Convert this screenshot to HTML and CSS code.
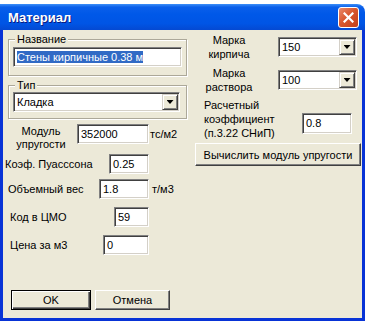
FILE: index.html
```html
<!DOCTYPE html>
<html lang="ru">
<head>
    <meta charset="UTF-8">
    <title>Материал</title>
    <link rel="stylesheet" href="styles.css">
</head>
<body>
<div class="window">
    <div class="titlebar">
        <span class="title">Материал</span>
        <span class="close">
            <svg width="11" height="11" viewBox="0 0 11 11"><path d="M1.5 1.5 L9.5 9.5 M9.5 1.5 L1.5 9.5" stroke="#fff" stroke-width="2.2" stroke-linecap="square"/></svg>
        </span>
    </div>
    <div class="client">
        <div class="col-left">
            <div class="group group-name">
                <span class="legend">Название</span>
                <div class="edit"><span class="sel">Стены кирпичные 0.38 м</span></div>
            </div>
            <div class="group group-type">
                <span class="legend">Тип</span>
                <div class="combo"><span class="combo-text">Кладка</span><span class="drop"></span></div>
            </div>
            <div class="row row-mod">
                <div class="pair">
                    <span class="lbl lbl-mod">Модуль<br>упругости</span>
                    <div class="edit edit-mod">352000</div>
                </div>
                <span class="unit unit-mod">тс/м2</span>
            </div>
            <div class="row row-poisson">
                <div class="pair">
                    <span class="lbl lbl-poisson">Коэф. Пуасссона</span>
                    <div class="edit edit-poisson">0.25</div>
                </div>
            </div>
            <div class="row row-weight">
                <div class="pair">
                    <span class="lbl lbl-weight">Объемный вес</span>
                    <div class="edit edit-weight">1.8</div>
                </div>
                <span class="unit unit-weight">т/м3</span>
            </div>
            <div class="row row-code">
                <div class="pair">
                    <span class="lbl lbl-code">Код в ЦМО</span>
                    <div class="edit edit-code">59</div>
                </div>
            </div>
            <div class="row row-price">
                <div class="pair">
                    <span class="lbl lbl-price">Цена за м3</span>
                    <div class="edit edit-price">0</div>
                </div>
            </div>
            <div class="buttons">
                <div class="btn btn-default">OK</div>
                <div class="btn btn-cancel">Отмена</div>
            </div>
        </div>
        <div class="col-right">
            <div class="rrow rrow-brick">
                <span class="rlbl">Марка<br>кирпича</span>
                <div class="combo combo-r"><span class="combo-text">150</span><span class="drop"></span></div>
            </div>
            <div class="rrow rrow-mortar">
                <span class="rlbl">Марка<br>раствора</span>
                <div class="combo combo-r"><span class="combo-text">100</span><span class="drop"></span></div>
            </div>
            <div class="rrow rrow-coef">
                <span class="clbl">Расчетный<br>коэффициент<br>(п.3.22 СНиП)</span>
                <div class="edit edit-coef">0.8</div>
            </div>
            <div class="btn btn-calc">Вычислить модуль упругости</div>
        </div>
    </div>
</div>
</body>
</html>
```

FILE: styles.css
```css
*{
    margin:0;
    padding:0;
    box-sizing:border-box;
}
body,html{
    width:100%;
    height:100%;
}
body{
    background:#fff;
    font-family:"Liberation Sans", Arial, sans-serif;
    font-size:11px;
    color:#000;
    overflow:hidden;
}
.window{
    width:365px;
    height:317px;
    margin-top:4px;
    display:flex;
    flex-direction:column;
}
.titlebar{
    height:26px;
    flex:none;
    display:flex;
    align-items:center;
    justify-content:space-between;
    padding:0 6px 0 8px;
    border-radius:0 8px 0 0;
    background:linear-gradient(#3d8ff8 0, #0a5fea 12%, #0058e8 40%, #0055e5 75%, #0449d2 100%);
}
.title{
    color:#fff;
    font-weight:bold;
    font-size:13px;
    text-shadow:1px 1px #0a1a80;
}
.close{
    width:21px;
    height:21px;
    border:1px solid #fff;
    border-radius:3px;
    background:linear-gradient(135deg, #e98a6c 0, #d9582f 45%, #c23f1a 100%);
    display:flex;
    align-items:center;
    justify-content:center;
}
.client{
    flex:1;
    display:grid;
    grid-template-columns:187px 1fr;
    background:#ece9d8;
    border:3px solid #0833d6;
    border-top:0;
}

/* group boxes */
.group{
    position:relative;
    margin-left:5px;
    width:179px;
    border:1px solid #aca899;
    box-shadow:inset 1px 1px #fff, 1px 1px #fff;
}
.legend{
    position:absolute;
    left:6px;
    top:-7px;
    line-height:13px;
    padding:0 2px;
    background:#ece9d8;
}
.group-name{
    margin-top:9px;
    padding:7px 4px 8px 4px;
}
.group-type{
    margin-top:9px;
    padding:6px 6px 6px 4px;
}

/* edits and combos */
.edit{
    height:20px;
    background:#fff;
    border:1px solid;
    border-color:#808080 #fff #fff #808080;
    box-shadow:inset 1px 1px #404040, inset -1px -1px #d4d0c8;
    padding:0 3px;
    line-height:18px;
    white-space:nowrap;
}
.sel{
    background:#316ac5;
    color:#fff;
}
.combo{
    height:20px;
    background:#fff;
    border:1px solid;
    border-color:#808080 #fff #fff #808080;
    box-shadow:inset 1px 1px #404040, inset -1px -1px #d4d0c8;
    display:flex;
    align-items:center;
    padding:1px;
}
.combo-text{
    flex:1;
    padding-left:2px;
}
.drop{
    width:16px;
    height:16px;
    background:#ece9d8;
    border:1px solid;
    border-color:#d4d0c8 #404040 #404040 #d4d0c8;
    box-shadow:inset 1px 1px #fff, inset -1px -1px #808080;
    display:flex;
    align-items:center;
    justify-content:center;
}
.drop::after{
    content:"";
    width:7px;
    height:4px;
    background:#000;
    clip-path:polygon(0 0, 100% 0, 50% 100%);
}

/* left column rows */
.col-left{
    display:flex;
    flex-direction:column;
    padding-bottom:8px;
}
.row{
    display:flex;
    align-items:center;
}
.pair{
    width:146px;
    display:flex;
    align-items:center;
}
.lbl{
    flex:1;
    line-height:13px;
    white-space:nowrap;
}
.row-mod{
    margin-top:5px;
    align-items:flex-start;
}
.row-mod .pair{
    align-items:flex-start;
}
.lbl-mod{
    flex:none;
    width:62px;
    margin:1px auto 0 7px;
    text-align:center;
}
.edit-mod{ width:72px; }
.unit{ line-height:13px; }
.unit-mod{ margin:4px 0 0 1px; }

.row-poisson{ margin-top:3px; }
.lbl-poisson{ margin-left:2px; }
.edit-poisson{ width:40px; }

.row-weight{ margin-top:5px; }
.lbl-weight{ margin-left:5px; }
.edit-weight{ width:50px; }
.unit-weight{ margin-left:3px; }

.row-code{ margin-top:8px; }
.lbl-code{ margin-left:7px; }
.edit-code{ width:35px; }

.row-price{ margin-top:8px; }
.lbl-price{ margin-left:7px; }
.edit-price{ width:46px; }

/* buttons */
.buttons{
    margin-top:auto;
    margin-left:8px;
    display:flex;
    gap:4px;
}
.btn{
    height:20px;
    background:#ece9d8;
    border:1px solid;
    border-color:#fff #404040 #404040 #fff;
    box-shadow:inset -1px -1px #808080;
    display:flex;
    align-items:center;
    justify-content:center;
}
.btn-default{
    width:80px;
    border-color:#000;
    box-shadow:inset 1px 1px #fff, inset -1px -1px #404040, inset -2px -2px #808080;
}
.btn-cancel{ width:75px; }

/* right column */
.col-right{
    padding:3px 5px 0 5px;
}
.rrow{
    display:flex;
    align-items:center;
}
.rlbl{
    width:68px;
    text-align:center;
    line-height:14px;
}
.combo-r{
    width:79px;
    margin-left:auto;
}
.rrow-mortar{ margin-top:5px; }
.rrow-coef{
    margin-top:4px;
    align-items:flex-start;
}
.clbl{
    margin-left:9px;
    line-height:14px;
}
.edit-coef{
    width:50px;
    height:21px;
    margin:15px 5px 0 auto;
}
.btn-calc{
    margin:3px -4px 0 0;
    height:23px;
}
```
